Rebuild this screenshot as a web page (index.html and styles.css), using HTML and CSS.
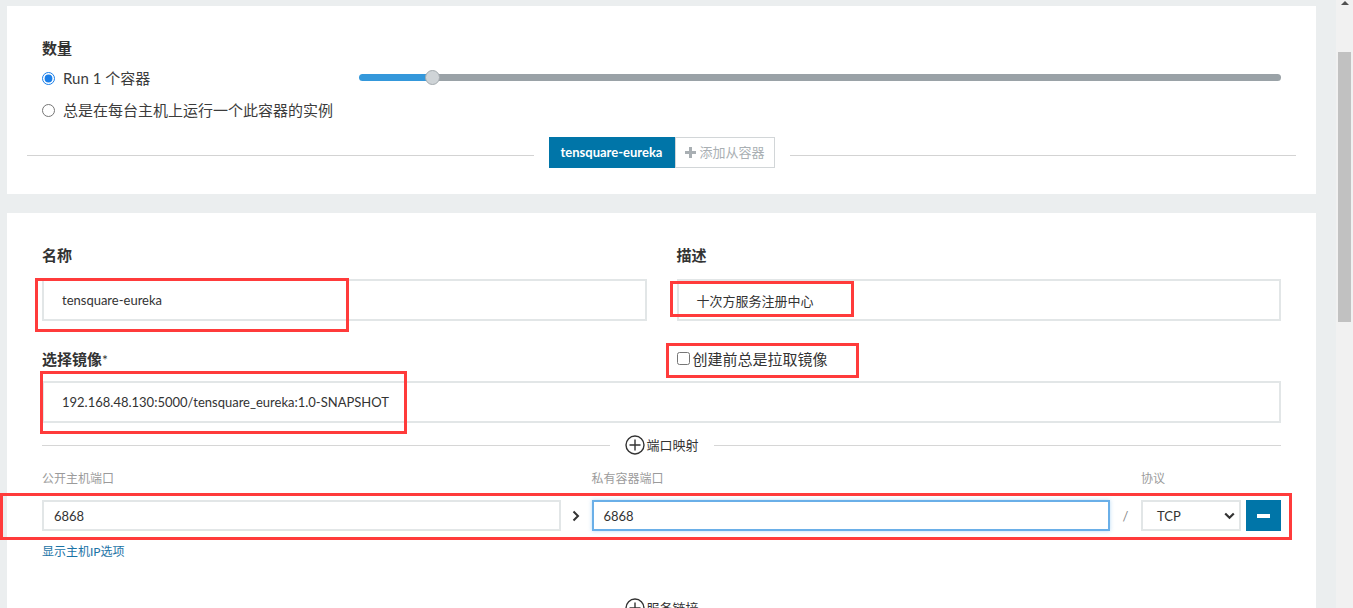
FILE: index.html
```html
<!DOCTYPE html>
<html lang="zh-CN">
<head>
<meta charset="utf-8">
<title>Rancher - 添加服务</title>
<link rel="stylesheet" href="styles.css">
</head>
<body>
<div class="page">
  <main class="content">
    <section class="card card-scale">
      <div class="scale">
        <div class="scale-left">
          <h4 class="field-label">数量</h4>
          <label class="radio-row"><input type="radio" name="scale" checked><span>Run 1 个容器</span></label>
          <label class="radio-row second"><input type="radio" name="scale"><span>总是在每台主机上运行一个此容器的实例</span></label>
        </div>
        <div class="slider">
          <div class="slider-fill"></div>
          <div class="slider-thumb"></div>
          <div class="slider-rest"></div>
        </div>
      </div>
      <div class="tabs-divider">
        <div class="rule"></div>
        <div class="tabs">
          <button class="tab tab-active">tensquare-eureka</button>
          <button class="tab tab-add"><svg class="plus" width="11" height="11" viewBox="0 0 11 11"><rect x="4" y="0" width="3" height="11" fill="#a9afb3"/><rect x="0" y="4" width="11" height="3" fill="#a9afb3"/></svg>添加从容器</button>
        </div>
        <div class="rule"></div>
      </div>
    </section>

    <section class="card card-form">
      <div class="two-col">
        <div class="col">
          <h4 class="field-label gap">名称</h4>
          <div class="input big">tensquare-eureka</div>
        </div>
        <div class="col">
          <h4 class="field-label gap">描述</h4>
          <div class="input big">十次方服务注册中心</div>
        </div>
      </div>

      <div class="two-col image-head">
        <h4 class="field-label">选择镜像<span class="req">*</span></h4>
        <label class="check-row"><input type="checkbox"><span>创建前总是拉取镜像</span></label>
      </div>
      <div class="input big image-input">192.168.48.130:5000/tensquare_eureka:1.0-SNAPSHOT</div>

      <div class="section-divider ports-divider">
        <div class="rule"></div>
        <div class="section-title">
          <svg class="circle-plus" width="20" height="20" viewBox="0 0 20 20"><circle cx="10" cy="10" r="9" fill="none" stroke="#333" stroke-width="1.4"/><path d="M10 4.5v11M4.5 10h11" stroke="#333" stroke-width="1.4"/></svg>
          <span>端口映射</span>
        </div>
        <div class="rule"></div>
      </div>

      <div class="ports">
        <div class="port-label c1">公开主机端口</div>
        <div class="port-label c3">私有容器端口</div>
        <div class="port-label c5">协议</div>

        <div class="input small c1">6868</div>
        <div class="sep c2"><svg width="8" height="12" viewBox="0 0 8 12"><path d="M1.5 1.5l4.5 4.5-4.5 4.5" fill="none" stroke="#333" stroke-width="2"/></svg></div>
        <div class="input small focused c3">6868</div>
        <div class="sep slash c4">/</div>
        <div class="select c5"><span>TCP</span><svg width="11" height="8" viewBox="0 0 11 8"><path d="M1.2 1.5l4.3 4.3 4.3-4.3" fill="none" stroke="#333" stroke-width="2.2"/></svg></div>
        <button class="remove c6"><span class="dash"></span></button>
      </div>

      <a class="link">显示主机IP选项</a>

      <div class="section-divider links-divider">
        <div class="rule"></div>
        <div class="section-title">
          <svg class="circle-plus" width="20" height="20" viewBox="0 0 20 20"><circle cx="10" cy="10" r="9" fill="none" stroke="#333" stroke-width="1.4"/><path d="M10 4.5v11M4.5 10h11" stroke="#333" stroke-width="1.4"/></svg>
          <span>服务链接</span>
        </div>
        <div class="rule"></div>
      </div>
    </section>
  </main>

  <div class="scrollbar">
    <div class="scroll-arrow"></div>
    <div class="scroll-thumb"></div>
  </div>
</div>

<div class="mark mark-name"></div>
<div class="mark mark-desc"></div>
<div class="mark mark-pull"></div>
<div class="mark mark-image"></div>
<div class="mark mark-ports"></div>
</body>
</html>
```

FILE: styles.css
```css
* { box-sizing: border-box; }

html, body {
  margin: 0;
  height: 608px;
  overflow: hidden;
}

body {
  position: relative;
  background: #ebeeef;
  font-family: Lato, "Noto Sans CJK SC", sans-serif;
  color: #333;
}

.page {
  display: flex;
  height: 608px;
}

.content {
  flex: 1;
  padding: 6px 20px 0 7px;
  min-width: 0;
}

.card {
  background: #fff;
}

/* ---------- scale card ---------- */
.card-scale {
  padding: 32px 35px 26px;
}

.scale {
  display: flex;
}

.scale-left {
  width: 317px;
  flex: none;
}

.field-label {
  margin: 0;
  font-size: 15px;
  font-weight: 700;
  line-height: 20px;
  color: #333;
}

.field-label.gap {
  margin-bottom: 14px;
}

.req {
  font-weight: 400;
  font-size: 14px;
}

.radio-row {
  display: flex;
  align-items: center;
  height: 20px;
  margin-top: 10px;
  font-size: 15px;
  line-height: 20px;
  color: #3c3c3c;
}

.radio-row.second {
  margin-top: 12px;
}

.radio-row input {
  margin: 0 8px 0 0;
  width: 13px;
  height: 13px;
  accent-color: #1a7ee8;
}

.slider {
  flex: 1;
  display: flex;
  align-items: center;
  height: 15px;
  margin-top: 32px;
}

.slider-fill {
  width: 70px;
  height: 7px;
  background: #3498db;
  border-radius: 4px 0 0 4px;
}

.slider-thumb {
  position: relative;
  z-index: 1;
  width: 15px;
  height: 15px;
  margin: 0 -4px;
  border-radius: 50%;
  background: #cfd4d7;
  border: 1px solid #a3aaae;
}

.slider-rest {
  flex: 1;
  height: 7px;
  background: #9aa2a7;
  border-radius: 0 4px 4px 0;
}

.tabs-divider {
  display: flex;
  align-items: flex-start;
  margin: 17px -15px 0;
}

.tabs-divider .rule {
  flex: 1;
  height: 1px;
  margin-top: 18px;
  background: #d3d3d3;
}

.tabs {
  display: flex;
  margin: 0 15px;
}

.tab {
  height: 31px;
  font-family: inherit;
  font-size: 13px;
  line-height: 29px;
  border: none;
  margin: 0;
  cursor: pointer;
}

.tab-active {
  background: #0075a8;
  color: #fff;
  font-weight: 700;
  padding: 0 11px;
  width: 126px;
}

.tab-add {
  display: flex;
  align-items: center;
  width: 100px;
  padding: 0 9px;
  background: #fff;
  border: 1px solid #d2d6d8;
  color: #a9afb3;
}

.tab-add .plus {
  margin-right: 4px;
}

/* ---------- form card ---------- */
.card-form {
  margin-top: 19px;
  padding: 32px 35px 0;
  height: 420px;
}

.two-col {
  display: grid;
  grid-template-columns: 1fr 1fr;
  column-gap: 30px;
}

.input {
  border: 2px solid #e2e6e7;
  background: #fff;
  font-size: 13px;
  color: #333;
  display: flex;
  align-items: center;
}

.input.big {
  height: 42px;
  padding-left: 18px;
}

.image-head {
  margin-top: 28px;
  align-items: center;
}

.check-row {
  display: flex;
  align-items: center;
  height: 20px;
  margin-top: -2px;
  font-size: 15px;
  line-height: 20px;
  color: #333;
}

.check-row input {
  margin: 0 3px 0 0;
  width: 13px;
  height: 13px;
}

.image-input {
  margin-top: 11px;
}

.section-divider {
  display: flex;
  align-items: center;
  height: 20px;
}

.section-divider .rule {
  flex: 1;
  height: 1px;
  background: #d6d6d6;
}

.section-title {
  display: flex;
  align-items: center;
  margin: 0 15px;
  font-size: 13px;
  line-height: 20px;
  color: #333;
}

.section-title span {
  margin-left: 2px;
}

.ports-divider {
  margin-top: 12px;
}

.ports {
  display: grid;
  grid-template-columns: 1fr 31px 1fr 31px 100px 40px;
  row-gap: 13px;
  margin-top: 16px;
}

.port-label {
  font-size: 12px;
  line-height: 16px;
  color: #9b9b9b;
}

.c1 { grid-column: 1; }
.c2 { grid-column: 2; }
.c3 { grid-column: 3; }
.c4 { grid-column: 4; }
.c5 { grid-column: 5; }
.c6 { grid-column: 6; }

.input.small {
  height: 31px;
  padding-left: 10px;
}

.input.focused {
  border-color: #6aafe8;
  box-shadow: 0 0 4px rgba(102, 175, 233, 0.45);
}

.sep {
  display: flex;
  align-items: center;
  justify-content: center;
  color: #888;
  font-size: 13px;
}

.select {
  height: 31px;
  border: 2px solid #e2e6e7;
  display: flex;
  align-items: center;
  justify-content: space-between;
  padding: 0 4px 0 14px;
  font-size: 13px;
  color: #333;
}

.remove {
  margin: 0 0 0 5px;
  width: 35px;
  height: 31px;
  border: none;
  padding: 0;
  background: #0075a8;
  display: flex;
  align-items: center;
  justify-content: center;
}

.dash {
  width: 13px;
  height: 4px;
  background: #fff;
}

.link {
  display: block;
  margin-top: 13px;
  font-size: 12px;
  line-height: 16px;
  color: #1b73a6;
}

.links-divider {
  margin-top: 38px;
}

/* ---------- scrollbar ---------- */
.scrollbar {
  width: 17px;
  flex: none;
  background: #f1f1f1;
  display: flex;
  flex-direction: column;
  align-items: center;
}

.scroll-arrow {
  margin-top: 1px;
  width: 0;
  height: 0;
  border-left: 4px solid transparent;
  border-right: 4px solid transparent;
  border-bottom: 4px solid #505050;
}

.scroll-thumb {
  margin-top: 47px;
  width: 13px;
  height: 270px;
  background: #c1c1c1;
}

/* ---------- annotation boxes ---------- */
.mark {
  position: absolute;
  border: 3px solid #ff3b3b;
}

.mark-name  { left: 35px;  top: 278px; width: 314px;  height: 54px; }
.mark-desc  { left: 670px; top: 281px; width: 184px;  height: 36px; }
.mark-pull  { left: 666px; top: 343px; width: 193px;  height: 35px; }
.mark-image { left: 40px;  top: 371px; width: 367px;  height: 63px; }
.mark-ports { left: 0;     top: 493px; width: 1292px; height: 47px; }
```
